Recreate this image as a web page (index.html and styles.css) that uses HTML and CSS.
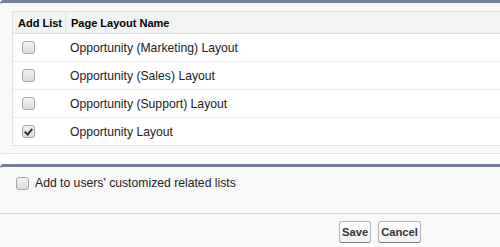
FILE: index.html
```html
<!DOCTYPE html>
<html lang="en">
<head>
<meta charset="UTF-8" />
<title>Add Related List</title>
<link rel="stylesheet" href="styles.css">
</head>
<body>
    <div class="panel">
        <table class="list">
            <thead>
                <tr>
                    <th class="col-add">Add List</th>
                    <th>Page Layout Name</th>
                </tr>
            </thead>
            <tbody>
                <tr>
                    <td class="col-add"><input type="checkbox" /></td>
                    <td>Opportunity (Marketing) Layout</td>
                </tr>
                <tr>
                    <td class="col-add"><input type="checkbox" /></td>
                    <td>Opportunity (Sales) Layout</td>
                </tr>
                <tr>
                    <td class="col-add"><input type="checkbox" /></td>
                    <td>Opportunity (Support) Layout</td>
                </tr>
                <tr>
                    <td class="col-add"><input type="checkbox" checked /></td>
                    <td>Opportunity Layout</td>
                </tr>
            </tbody>
        </table>
    </div>

    <div class="panel panel-bottom">
        <label class="option"><input type="checkbox" /> Add to users' customized related lists</label>
        <div class="buttons">
            <button class="btn">Save</button>
            <button class="btn">Cancel</button>
        </div>
    </div>
</body>
</html>
```

FILE: styles.css
```css
* {
    margin:0px;
    padding:0px;
    box-sizing:border-box;
}

body {
    font-family:Arial, 'Liberation Sans', Helvetica, sans-serif;
    font-size:12.2px;
    color:#222;
    background-color:#fff;
}

.panel {
    border-top:3px solid #747e96;
    border-bottom:1px solid #e4e4e4;
    border-radius:4px 0px 0px 4px;
    background-color:#f8f8f8;
    padding:8px 0px 7px 12px;
}

.list {
    width:100%;
    table-layout:fixed;
    border-collapse:separate;
    border-spacing:0px;
    background-color:#fff;
    border:1px solid #e0e3e5;
    border-right:none;
}

.list th {
    height:22px;
    padding:0px 2px 0px 5px;
    font-size:11px;
    font-weight:bold;
    color:#000;
    text-align:left;
    white-space:nowrap;
    background-color:#f2f3f3;
    border-bottom:1px solid #e0e3e5;
}

.list th.col-add {
    width:53px;
    border-right:1px solid #e0e3e5;
}

.list td {
    height:28px;
    padding:0px 4px;
    border-bottom:1px solid #ececec;
}

.list tr:last-child td {
    height:27px;
    border-bottom:none;
}

.list td.col-add {
    padding-left:9px;
}

input[type="checkbox"] {
    -webkit-appearance:none;
            appearance:none;
    position:relative;
    display:inline-block;
    width:13px;
    height:13px;
    margin:0px;
    vertical-align:-2px;
    border:1px solid #a6a6a6;
    border-radius:3px;
    background:linear-gradient(#f3f3f3, #dcdcdc);
}

input[type="checkbox"]:checked:after {
    content:"";
    position:absolute;
    left:3px;
    top:1px;
    width:3px;
    height:6px;
    border-right:2px solid #333;
    border-bottom:2px solid #333;
    transform:rotate(40deg);
}

.panel-bottom {
    margin-top:10px;
    border-radius:4px 0px 0px 0px;
    border-bottom:none;
    padding:0px;
}

.option {
    display:flex;
    align-items:center;
    gap:6px;
    height:47px;
    padding:0px 16px 14px;
    border-bottom:1px solid #d8d8d8;
}

.buttons {
    display:flex;
    gap:7px;
    padding:7px 0px 4px 339px;
}

.btn {
    height:22px;
    padding:0px 2px;
    font-family:Arial, 'Liberation Sans', Helvetica, sans-serif;
    font-size:11.2px;
    font-weight:bold;
    color:#333;
    background:linear-gradient(#fff, #f1f1f1);
    border:1px solid #b5b5b5;
    border-bottom-color:#7f7f7f;
    border-radius:3px;
    cursor:pointer;
}
```
